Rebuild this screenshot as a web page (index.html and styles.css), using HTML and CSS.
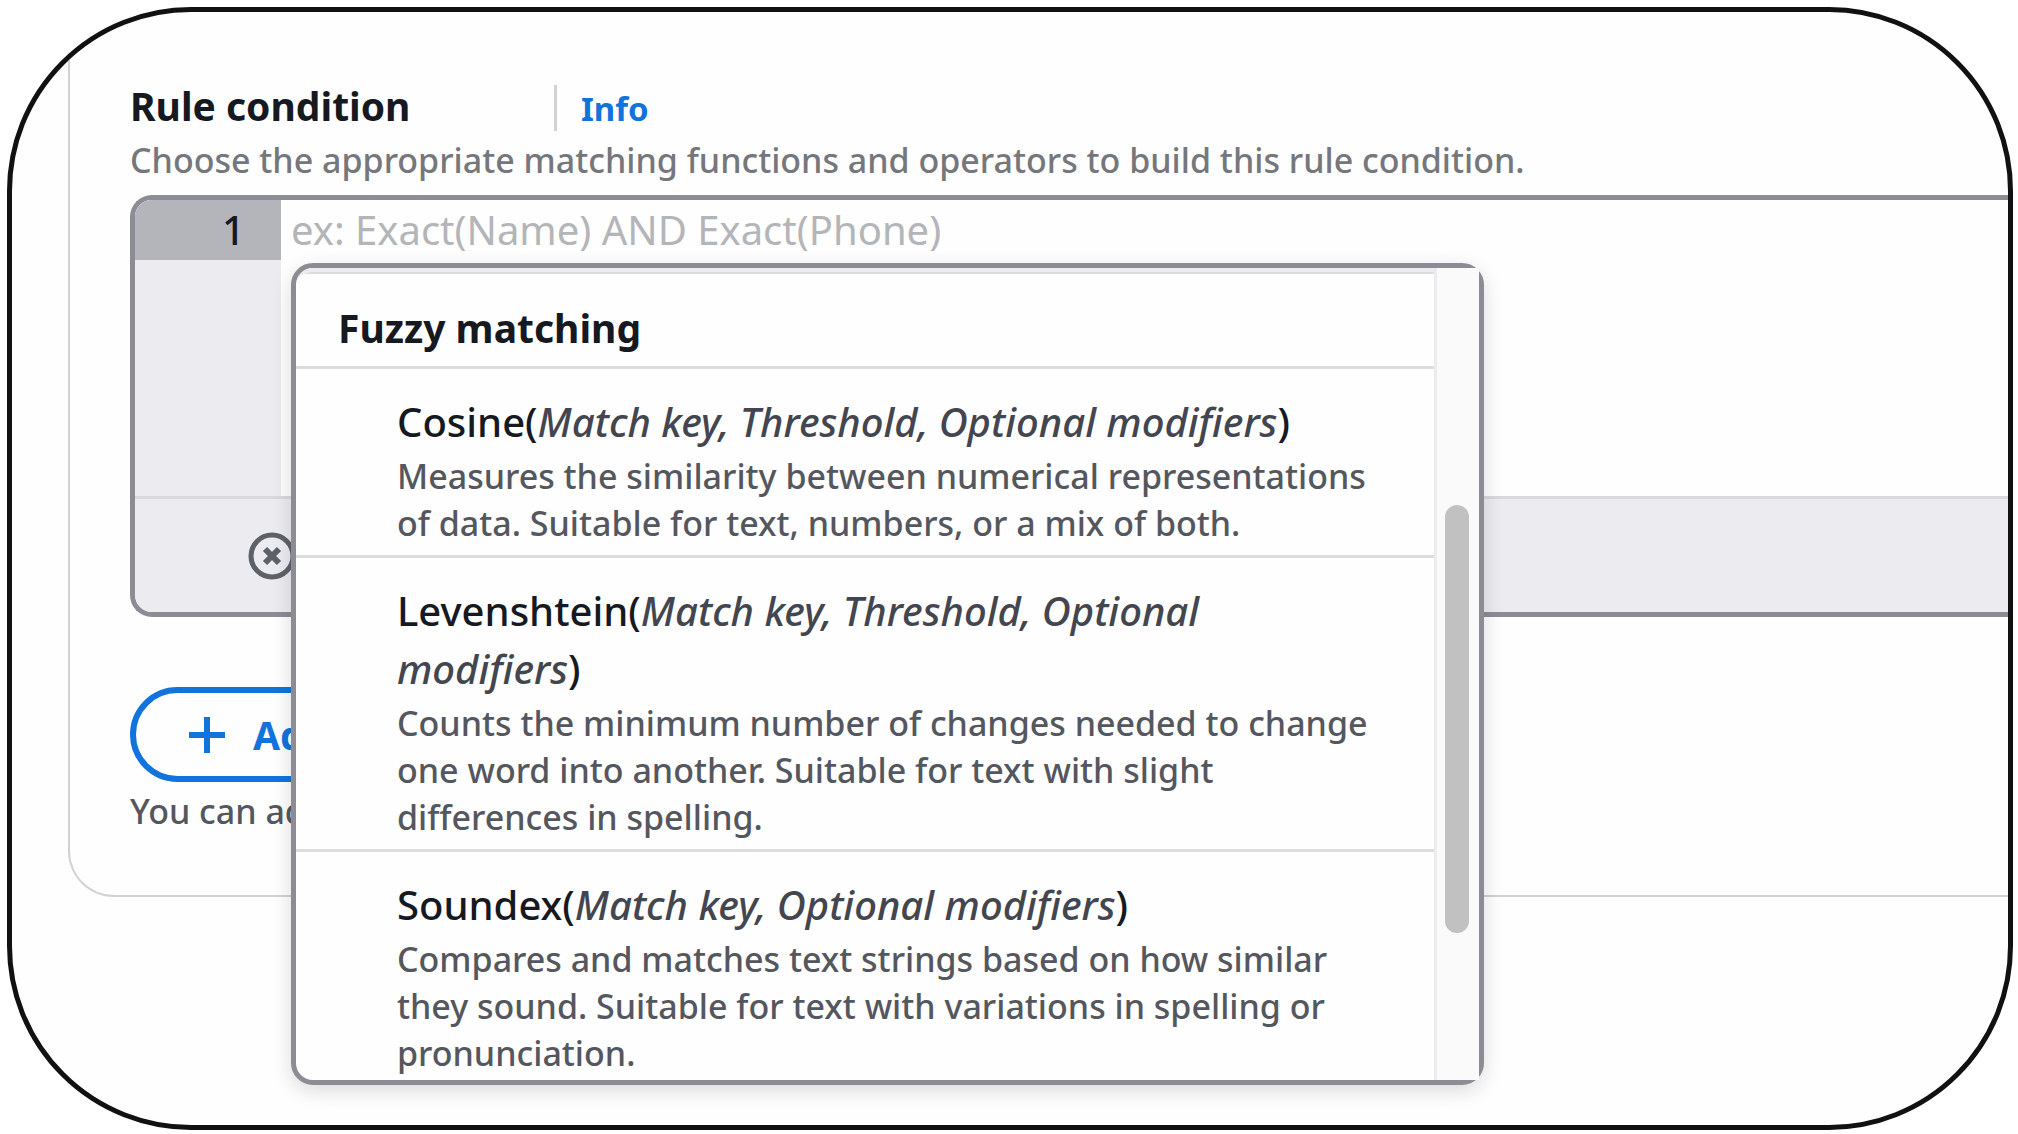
FILE: index.html
```
<!DOCTYPE html>
<html lang="en">
<head>
<meta charset="utf-8">
<meta name="viewport" content="width=device-width, initial-scale=1">
<title>Rule condition</title>
<link rel="stylesheet" href="styles.css">
</head>
<body>
<main class="frame">
  <section class="panel">
    <header class="panel-header">
      <h2 class="heading"><label for="rule">Rule condition</label></h2>
      <a class="info-link" href="#info">Info</a>
    </header>
    <p class="description" id="rule-description">Choose the appropriate matching functions and operators to build this rule condition.</p>

    <div class="editor">
      <div class="editor-body">
        <div class="gutter"><span class="line-number">1</span></div>
        <textarea class="code" id="rule" aria-describedby="rule-description" placeholder="ex: Exact(Name) AND Exact(Phone)"></textarea>
      </div>
      <div class="status-bar">
        <svg class="status-icon" viewBox="0 0 48 48" role="img" aria-label="Errors">
          <circle cx="24" cy="24" r="21"/>
          <path d="M17 17l14 14M31 17L17 31"/>
        </svg>
      </div>

      <div class="popup">
        <div class="popup-list">
          <h3 class="group-title">Fuzzy matching</h3>
          <ul class="options">
            <li class="option">
              <p class="signature">Cosine(<em>Match key, Threshold, Optional modifiers</em>)</p>
              <p class="option-text">Measures the similarity between numerical representations of data. Suitable for text, numbers, or a mix of both.</p>
            </li>
            <li class="option">
              <p class="signature">Levenshtein(<em>Match key, Threshold, Optional modifiers</em>)</p>
              <p class="option-text">Counts the minimum number of changes needed to change one word into another. Suitable for text with slight differences in spelling.</p>
            </li>
            <li class="option">
              <p class="signature">Soundex(<em>Match key, Optional modifiers</em>)</p>
              <p class="option-text">Compares and matches text strings based on how similar they sound. Suitable for text with variations in spelling or pronunciation.</p>
            </li>
          </ul>
        </div>
        <div class="scroll-track"><div class="scroll-thumb"></div></div>
      </div>
    </div>

    <button class="add-button" type="button">
      <svg class="plus" viewBox="0 0 36 36" aria-hidden="true"><path d="M18 0v36M0 18h36"/></svg>
      Add
    </button>
    <p class="hint">You can add</p>
  </section>
</main>
</body>
</html>
```
FILE: styles.css
```
* {
  box-sizing: border-box;
}

body {
  margin: 0;
  padding: 7px 5px 4px 7px;
  background: #fff;
  color: #16191f;
  font-family: "Noto Sans", "Open Sans", sans-serif;
  font-weight: 500;
}

h2, h3, p, ul {
  margin: 0;
  padding: 0;
}

.frame {
  min-height: calc(100vh - 11px);
  overflow: hidden;
  border: 5px solid #111;
  border-radius: 184px;
  background: #fefefe;
}

.panel {
  margin-left: 56px;
  padding: 73px 0 60px 60px;
  border: solid #d2d2d4;
  border-width: 0 0 2px 2px;
  border-bottom-left-radius: 46px;
}

/* Heading row */
.panel-header {
  display: flex;
  align-items: stretch;
  height: 46px;
}

.heading {
  width: 424px;
  font-size: 39px;
  font-weight: 700;
  line-height: 42px;
}

.info-link {
  padding-left: 24px;
  border-left: 3px solid #d2d2d4;
  color: #1273dc;
  font-size: 33px;
  font-weight: 700;
  line-height: 48px;
  text-decoration: none;
}

.description {
  margin-top: 6px;
  color: #75777c;
  font-size: 34px;
  line-height: 47px;
}

/* Code editor */
.editor {
  position: relative;
  margin-top: 11px;
  border: solid #8c8c94;
  border-width: 5px 0 5px 5px;
  border-radius: 22px 0 0 22px;
}

.editor-body {
  display: flex;
  height: 296px;
}

.gutter {
  width: 146px;
  background: #ebebf0;
  border-top-left-radius: 17px;
}

.line-number {
  display: block;
  height: 60px;
  padding-right: 36px;
  border-top-left-radius: 17px;
  background: #b4b4bb;
  font-size: 40px;
  line-height: 60px;
  text-align: right;
}

.code {
  flex: 1;
  min-width: 0;
  padding: 0 10px;
  border: 0;
  outline: 0;
  resize: none;
  background: #fefefe;
  color: #16191f;
  font: 400 40px/60px "Noto Sans", "Open Sans", sans-serif;
}

.code::placeholder {
  color: #b4b5b8;
  opacity: 1;
}

.status-bar {
  display: flex;
  align-items: center;
  height: 116px;
  padding-left: 113px;
  border-top: 3px solid #d9d9dd;
  border-bottom-left-radius: 17px;
  background: #ebebf0;
}

.status-icon {
  width: 48px;
  height: 48px;
  fill: none;
  stroke: #5f6168;
  stroke-width: 5;
}

.status-icon path {
  stroke-width: 6;
}

/* Suggestions popup over the editor */
.popup {
  position: absolute;
  top: 63px;
  left: 156px;
  display: flex;
  width: 1193px;
  height: 822px;
  border: 5px solid #8c8c94;
  border-radius: 22px;
  background: #fefefe;
  box-shadow: 0 6px 20px rgba(0, 7, 22, 0.14);
}

.popup-list {
  flex: 1;
  overflow: hidden;
  border-top: 4px solid #ebebf0;
  border-radius: 17px 0 0 17px;
}

.group-title {
  padding: 25px 42px 9px;
  border: solid #dcdcde;
  border-width: 2px 0 3px;
  font-size: 39px;
  font-weight: 700;
  line-height: 58px;
}

.options {
  list-style: none;
}

.option {
  padding: 24px 60px 8px 101px;
  border-bottom: 3px solid #dcdcde;
}

.signature {
  font-size: 40px;
  line-height: 58px;
}

.signature em {
  color: #43464f;
}

.option-text {
  padding-top: 2px;
  color: #55575e;
  font-size: 34px;
  line-height: 47px;
}

.scroll-track {
  width: 45px;
  padding: 237px 10px 0 8px;
  border-left: 3px solid #ececee;
  background: #fafafa;
}

.scroll-thumb {
  height: 428px;
  border-radius: 12px;
  background: #c1c1c1;
}

/* Add control */
.add-button {
  display: flex;
  align-items: center;
  gap: 28px;
  height: 95px;
  margin-top: 70px;
  padding: 0 54px 0 53px;
  border: 6px solid #1273dc;
  border-radius: 48px;
  background: #fefefe;
  color: #1273dc;
  font: 700 39px/58px "Noto Sans", "Open Sans", sans-serif;
}

.plus {
  width: 36px;
  height: 36px;
  fill: none;
  stroke: #1273dc;
  stroke-width: 6;
}

.hint {
  margin-top: 6px;
  color: #55575e;
  font-size: 34px;
  line-height: 47px;
}
```
